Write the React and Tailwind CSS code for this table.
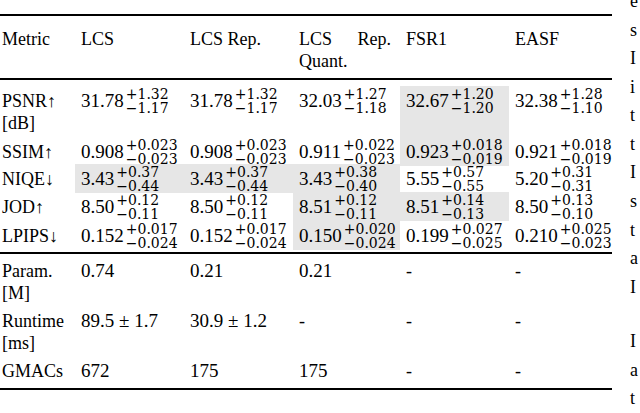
import React from 'react';

const cols = "grid grid-cols-[75px_109px_109px_107px_109px_103px]";

const top = [
  {
    name: 'PSNR↑ [dB]', h: 'h-[51px]',
    cells: [
      ['31.78', '1.32', '1.17'], ['31.78', '1.32', '1.17'], ['32.03', '1.27', '1.18'],
      ['32.67', '1.20', '1.20', true], ['32.38', '1.28', '1.10'],
    ],
  },
  {
    name: 'SSIM↑', h: 'h-[27px]',
    cells: [
      ['0.908', '0.023', '0.023'], ['0.908', '0.023', '0.023'], ['0.911', '0.022', '0.023'],
      ['0.923', '0.018', '0.019', true], ['0.921', '0.018', '0.019'],
    ],
  },
  {
    name: 'NIQE↓', h: 'h-[28px]',
    cells: [
      ['3.43', '0.37', '0.44', true], ['3.43', '0.37', '0.44', true], ['3.43', '0.38', '0.40', true],
      ['5.55', '0.57', '0.55'], ['5.20', '0.31', '0.31'],
    ],
  },
  {
    name: 'JOD↑', h: 'h-[29px]',
    cells: [
      ['8.50', '0.12', '0.11'], ['8.50', '0.12', '0.11'], ['8.51', '0.12', '0.11', true],
      ['8.51', '0.14', '0.13', true], ['8.50', '0.13', '0.10'],
    ],
  },
  {
    name: 'LPIPS↓', h: 'h-[28px]',
    cells: [
      ['0.152', '0.017', '0.024'], ['0.152', '0.017', '0.024'], ['0.150', '0.020', '0.024', true],
      ['0.199', '0.027', '0.025'], ['0.210', '0.025', '0.023'],
    ],
  },
];

const bottom = [
  { name: 'Param. [M]', cells: ['0.74', '0.21', '0.21', '-', '-'] },
  { name: 'Runtime [ms]', cells: ['89.5 ± 1.7', '30.9 ± 1.2', '-', '-', '-'] },
  { name: 'GMACs', cells: ['672', '175', '175', '-', '-'] },
];

const edge = ['e', 's', 'I', 'i', 't', 't', 'I', 's', 't', 'a', 'I', '', 'I', 'a', 't'];

const Num = ({ v, up, down, gray }) => (
  <div className={gray ? "flex items-start pl-[6px] bg-[#e6e6e6]" : "flex items-start pl-[6px]"}>
    <span className="mt-[3.5px] text-[19px] leading-[22px]">{v}</span>
    <span className="ml-[2px] mt-[1px] flex flex-col font-['DejaVu_Serif',serif] text-[14px] leading-[14px]">
      <span>+{up}</span>
      <span>−{down}</span>
    </span>
  </div>
);

export default function App() {
  return (
    <div className="w-[640px] h-[413px] overflow-hidden bg-white flex text-black font-['Liberation_Serif','Times_New_Roman',serif]">
      <div className="w-[612px] shrink-0 pt-[14px]">
        <div className="h-[2px] bg-black" />

        {/* header */}
        <div className={cols + " pt-[12px] pb-[6px] text-[18px] leading-[22px]"}>
          <div className="pl-[2px]">Metric</div>
          <div className="pl-[6px]">LCS</div>
          <div className="pl-[6px]">LCS Rep.</div>
          <div className="pl-[6px] pr-[9px] text-justify">LCS Rep. Quant.</div>
          <div className="pl-[6px]">FSR1</div>
          <div className="pl-[6px]">EASF</div>
        </div>
        <div className="h-[2px] bg-black" />

        {/* quality metrics */}
        <div className="pt-[6px] pb-[3px]">
          {top.map((row) => (
            <div key={row.name} className={cols + " " + row.h}>
              <div className="pl-[2px] pr-[6px] pt-[4px] text-[18px] leading-[22px]">{row.name}</div>
              {row.cells.map(([v, up, down, gray], i) => (
                <Num key={i} v={v} up={up} down={down} gray={gray} />
              ))}
            </div>
          ))}
        </div>
        <div className="h-[2px] bg-black" />

        {/* cost */}
        <div className="pb-[6px]">
          {bottom.map((row) => (
            <div key={row.name} className={cols + " pt-[6px] text-[18px] leading-[22px]"}>
              <div className="pl-[2px] pr-[6px]">{row.name}</div>
              {row.cells.map((c, i) => (
                <div key={i} className={c === '-' ? "pl-[6px]" : "pl-[6px] text-[19px] whitespace-nowrap"}>{c}</div>
              ))}
            </div>
          ))}
        </div>
        <div className="h-[2px] bg-black" />
      </div>

      {/* next column of the page, cut at the edge */}
      <div className="ml-[18px] -mt-[13px] flex flex-col shrink-0 text-[18px] leading-[28.57px] whitespace-nowrap">
        {edge.map((w, i) => (
          <div key={i} className="h-[28.57px]">{w}</div>
        ))}
      </div>
    </div>
  );
}
